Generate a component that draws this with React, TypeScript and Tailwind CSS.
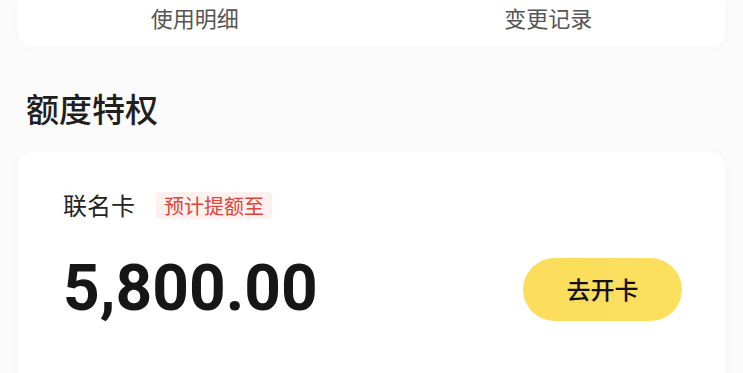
export default function App() {
  const tabs = ["使用明细", "变更记录"];
  return (
    <div
      className="h-[373px] w-[743px] overflow-hidden bg-[#fbfbfb]"
      style={{ fontFamily: '"Noto Sans CJK SC", "Noto Sans", sans-serif' }}
    >
      <div className="mx-[18px] flex h-[46px] items-start rounded-b-[14px] bg-white pt-[3px] shadow-[0_2px_12px_rgba(0,0,0,0.015)]">
        {tabs.map((t) => (
          <div
            key={t}
            className="flex-1 text-center text-[22px] leading-[28px] text-[#555]"
          >
            {t}
          </div>
        ))}
      </div>

      <h2 className="mt-[41px] ml-[26px] text-[33px] font-medium leading-[42px] text-[#1f1f1f]">
        额度特权
      </h2>

      <div className="mx-[18px] mt-[23px] h-[260px] rounded-[14px] bg-white pl-[45px] pr-[43px] pt-[36px] shadow-[0_0_12px_rgba(0,0,0,0.02)]">
        <div className="flex items-center gap-[21px]">
          <span className="text-[24px] leading-[34px] text-[#222]">联名卡</span>
          <span className="rounded-[3px] bg-[#fdf1ef] px-[8px] text-[20px] leading-[27px] text-[#e0443a]">
            预计提额至
          </span>
        </div>
        <div className="mt-[32px] flex items-center justify-between">
          <span
            className="text-[64px] font-bold leading-[70px] text-[#161616]"
            style={{ fontFamily: "Roboto, sans-serif" }}
          >
            5,800.00
          </span>
          <button className="flex h-[63px] w-[159px] items-center justify-center rounded-full bg-gradient-to-r from-[#fbdc5c] to-[#fbe05e] text-[24px] font-medium text-[#111]">
            去开卡
          </button>
        </div>
      </div>
    </div>
  );
}
